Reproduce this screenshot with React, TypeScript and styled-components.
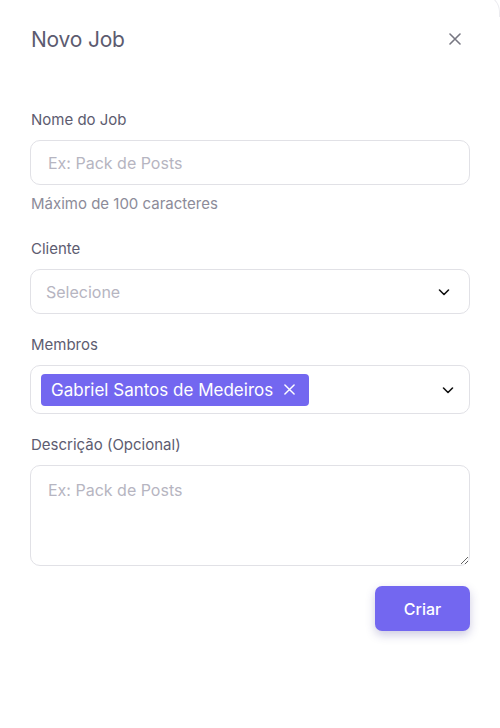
import styled, { createGlobalStyle } from 'styled-components'

const GlobalStyle = createGlobalStyle`
  * { box-sizing: border-box; }
  body {
    margin: 0;
    background: #ffffff;
    font-family: Inter, "Noto Sans", sans-serif;
  }
`

const ChevronDown = () => (
  <svg width="14" height="14" viewBox="0 0 14 14" fill="none">
    <path d="M2.5 5l4.5 4.5L11.5 5" stroke="#111" strokeWidth="1.6" strokeLinecap="round" strokeLinejoin="round" />
  </svg>
)

const CloseIcon = ({ size, color }: { size: number; color: string }) => (
  <svg width={size} height={size} viewBox="0 0 12 12" fill="none">
    <path d="M1 1l10 10M11 1L1 11" stroke={color} strokeWidth="1.6" strokeLinecap="round" />
  </svg>
)

const App = () => {
  return (
    <>
      <GlobalStyle />
      <Modal>
        <Header>
          <Title>Novo Job</Title>
          <CloseButton aria-label="Fechar">
            <CloseIcon size={12} color="#777782" />
          </CloseButton>
        </Header>

        <Form>
          <Field>
            <Label>Nome do Job</Label>
            <Input placeholder="Ex: Pack de Posts" />
            <Hint>Máximo de 100 caracteres</Hint>
          </Field>

          <Field>
            <Label>Cliente</Label>
            <SelectBox>
              <Placeholder>Selecione</Placeholder>
              <ChevronDown />
            </SelectBox>
          </Field>

          <Field>
            <Label>Membros</Label>
            <SelectBox $tall>
              <Chip>
                Gabriel Santos de Medeiros
                <ChipRemove>
                  <CloseIcon size={11} color="#ffffff" />
                </ChipRemove>
              </Chip>
              <ChevronDown />
            </SelectBox>
          </Field>

          <Field>
            <Label>Descrição (Opcional)</Label>
            <TextArea placeholder="Ex: Pack de Posts" />
          </Field>

          <Actions>
            <SubmitButton type="button">Criar</SubmitButton>
          </Actions>
        </Form>
      </Modal>
    </>
  )
}

export default App

const Modal = styled.div`
  position: relative;
  width: 500px;
  height: 728px;
  background: #fff;
  padding: 24px 30px 0 31px;
  &::after {
    content: '';
    position: absolute;
    top: -6px;
    right: 0;
    width: 18px;
    height: 22px;
    border-top: 1px solid #ececf0;
    border-right: 1px solid #ececf0;
    border-top-right-radius: 18px;
  }
`

const Header = styled.div`
  display: flex;
  align-items: center;
  justify-content: space-between;
  height: 30px;
  margin-bottom: 55px;
`

const Title = styled.h2`
  margin: 0;
  font-size: 21px;
  font-weight: 400;
  color: #5c5b70;
  letter-spacing: -0.2px;
`

const CloseButton = styled.button`
  border: none;
  background: none;
  padding: 0;
  margin-right: 9px;
  display: flex;
  cursor: pointer;
`

const Form = styled.div`
  display: flex;
  flex-direction: column;
`

const Field = styled.div`
  display: flex;
  flex-direction: column;
  margin-bottom: 20px;
`

const Label = styled.label`
  font-size: 15px;
  line-height: 22px;
  color: #5d5c70;
  margin-bottom: 9px;
`

const Input = styled.input`
  height: 45px;
  margin-left: -1px;
  border: 1px solid #e1e1e6;
  border-radius: 10px;
  padding: 0 17px;
  font-family: inherit;
  font-size: 16px;
  color: #333;
  outline: none;
  &::placeholder { color: #b6b5c1; }
`

const Hint = styled.span`
  margin-top: 8px;
  margin-bottom: 3px;
  font-size: 15px;
  line-height: 22px;
  color: #8c8b99;
`

const SelectBox = styled.div<{ $tall?: boolean }>`
  height: ${({ $tall }) => ($tall ? '49px' : '45px')};
  margin-left: -1px;
  border: 1px solid #e1e1e6;
  border-radius: 10px;
  display: flex;
  align-items: center;
  justify-content: space-between;
  padding: ${({ $tall }) => ($tall ? '0 14px 0 10px' : '0 18px 0 15px')};
`

const Placeholder = styled.span`
  font-size: 16px;
  color: #b6b5c1;
`

const Chip = styled.span`
  display: inline-flex;
  align-items: center;
  gap: 11px;
  height: 32px;
  padding: 0 14px 0 10px;
  border-radius: 4px;
  background: #7367f0;
  color: #fff;
  font-size: 17px;
`

const ChipRemove = styled.span`
  display: flex;
`

const TextArea = styled.textarea`
  height: 101px;
  margin-left: -1px;
  border: 1px solid #e1e1e6;
  border-radius: 10px;
  padding: 14px 17px;
  font-family: inherit;
  font-size: 16px;
  outline: none;
  resize: vertical;
  &::placeholder { color: #b6b5c1; }
`

const Actions = styled.div`
  display: flex;
  justify-content: flex-end;
`

const SubmitButton = styled.button`
  width: 95px;
  height: 45px;
  border: none;
  border-radius: 7px;
  background: #7367f0;
  color: #fff;
  font-family: inherit;
  font-size: 16px;
  font-weight: 500;
  box-shadow: 0 4px 10px rgba(60, 50, 140, 0.25);
  cursor: pointer;
`
